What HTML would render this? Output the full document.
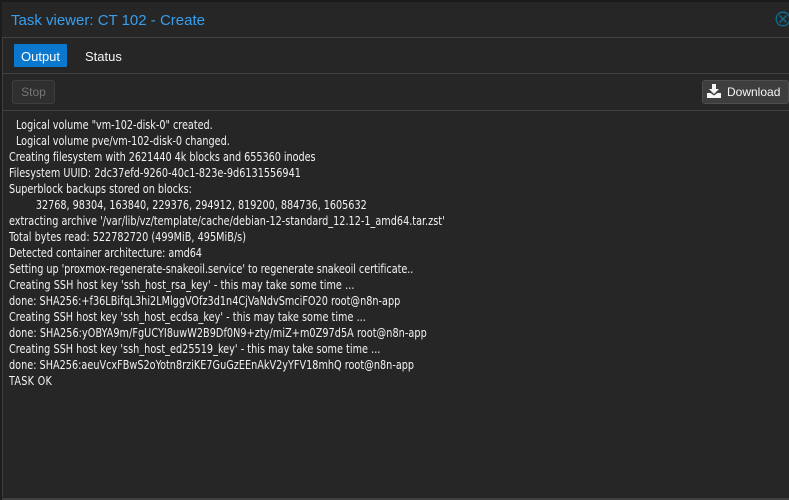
<!DOCTYPE html>
<html><head><meta charset="utf-8"><style>
html,body{margin:0;padding:0;width:789px;height:500px;overflow:hidden;background:#262626;font-family:"Liberation Sans",sans-serif}
.a{position:absolute}
.line{position:absolute;left:3px;right:0;height:1px;background:#404040}
#log{position:absolute;left:9px;top:117px;font:12px/16px "DejaVu Sans Condensed","DejaVu Sans",sans-serif;color:#f2f2f2;white-space:nowrap;margin:0;transform:scaleX(.896);transform-origin:0 0}
#log div{height:16px}
</style></head><body>
<div class="a" style="left:0;top:0;width:789px;height:2px;background:#1a1a1a"></div>
<div class="a" style="left:0;top:0;width:2px;height:500px;background:#1c1c1c"></div>
<div class="a" style="left:2px;top:37px;width:1px;height:460px;background:#404040"></div>
<div class="a" style="left:2px;bottom:0;width:787px;height:2px;background:#404040"></div>
<div class="a" style="left:11px;top:11px;font-size:15px;line-height:20px;color:#369ff0;white-space:nowrap">Task viewer: CT 102 - Create</div>
<svg class="a" style="left:775px;top:11px" width="16" height="16" viewBox="0 0 16 16" fill="none" stroke="#0f6f94" stroke-width="1.3"><circle cx="8" cy="8" r="6.8"/><path d="M4.500 4.500 11.500 11.500M11.500 4.500 4.500 11.500"/></svg>
<div class="line" style="top:37px"></div>
<div class="a" style="left:14px;top:44px;width:53px;height:23px;background:#0b78d0;border-radius:1px;color:#fff;font-size:13px;line-height:25px;text-align:center">Output</div>
<div class="a" style="left:85px;top:44px;color:#f5f5f5;font-size:13px;line-height:25px">Status</div>
<div class="line" style="top:73px"></div>
<div class="a" style="left:12px;top:80px;width:41px;height:22px;background:#2f2f2f;border:1px solid #3e3e3e;border-radius:3px;color:#777;font-size:12px;line-height:22px;text-align:center">Stop</div>
<div class="a" style="left:702px;top:80px;width:85px;height:22px;background:#3e3e3e;border:1px solid #4e4e4e;border-radius:3px"></div>
<svg class="a" style="left:707px;top:84px" width="14" height="14" viewBox="0 0 14 14"><path fill="#f5f5f5" d="M5 0h4v5h3L7 10 2 5h3zM0 9h3.500L7 11.500 10.500 9H14v5H0z"/></svg>
<div class="a" style="left:727px;top:80px;color:#f5f5f5;font-size:12px;line-height:24px">Download</div>
<div class="line" style="top:110px"></div>
<div id="log">
<div style="padding-left:7.800px;letter-spacing:-.02px">Logical volume "vm-102-disk-0" created.</div>
<div style="padding-left:7.800px;letter-spacing:-.02px">Logical volume pve/vm-102-disk-0 changed.</div>
<div style="letter-spacing:-.035px">Creating filesystem with 2621440 4k blocks and 655360 inodes</div>
<div style="letter-spacing:.02px">Filesystem UUID: 2dc37efd-9260-40c1-823e-9d6131556941</div>
<div>Superblock backups stored on blocks:</div>
<div style="padding-left:30px;letter-spacing:-.025px">32768, 98304, 163840, 229376, 294912, 819200, 884736, 1605632</div>
<div style="letter-spacing:.013px">extracting archive '/var/lib/vz/template/cache/debian-12-standard_12.12-1_amd64.tar.zst'</div>
<div style="letter-spacing:.025px">Total bytes read: 522782720 (499MiB, 495MiB/s)</div>
<div style="letter-spacing:-.06px">Detected container architecture: amd64</div>
<div style="letter-spacing:-.05px">Setting up 'proxmox-regenerate-snakeoil.service' to regenerate snakeoil certificate..</div>
<div style="letter-spacing:.063px">Creating SSH host key 'ssh_host_rsa_key' - this may take some time ...</div>
<div style="letter-spacing:.016px">done: SHA256:+f36LBifqL3hi2LMlggVOfz3d1n4CjVaNdvSmciFO20 root@n8n-app</div>
<div style="letter-spacing:.03px">Creating SSH host key 'ssh_host_ecdsa_key' - this may take some time ...</div>
<div style="letter-spacing:.065px">done: SHA256:yOBYA9m/FgUCYI8uwW2B9Df0N9+zty/miZ+m0Z97d5A root@n8n-app</div>
<div style="letter-spacing:.03px">Creating SSH host key 'ssh_host_ed25519_key' - this may take some time ...</div>
<div style="letter-spacing:.016px">done: SHA256:aeuVcxFBwS2oYotn8rziKE7GuGzEEnAkV2yYFV18mhQ root@n8n-app</div>
<div style="letter-spacing:.3px">TASK OK</div>
</div>
</body></html>
